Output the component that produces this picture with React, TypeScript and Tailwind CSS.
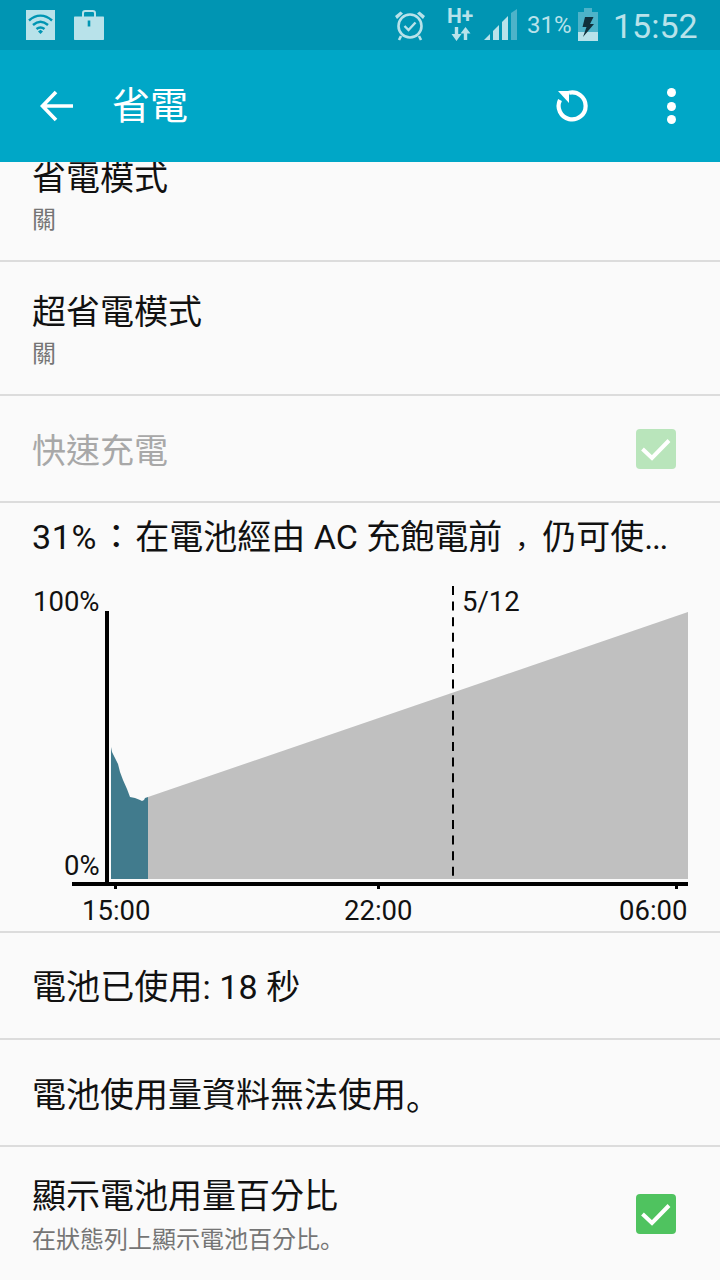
const sans = "font-['Roboto','Noto_Sans_CJK_TC',sans-serif]";
const sc = "font-['Noto_Sans_CJK_SC',sans-serif]";

const StatusBar = () => (
  <div className="relative flex h-[50px] shrink-0 items-center bg-[#0095b3] text-[#b8e2ea]">
    {/* wifi */}
    <svg width="29" height="30" viewBox="0 0 29 30" className="absolute left-[26px] top-[10px]">
      <rect width="29" height="30" fill="#b8e2ea" />
      <path d="M3 10.500C10 4 19 4 26 10.500" fill="none" stroke="#0095b3" strokeWidth="2.400" />
      <path d="M7 15C12 10.600 17 10.600 22 15" fill="none" stroke="#0095b3" strokeWidth="2.400" />
      <path d="M10.500 19C13 17 16 17 18.500 19" fill="none" stroke="#0095b3" strokeWidth="2.400" />
      <path d="M12 21.500L14.500 19.800L17 21.500L14.500 24Z" fill="#0095b3" />
    </svg>
    {/* briefcase */}
    <svg width="32" height="30" viewBox="0 0 32 30" className="absolute left-[73px] top-[10px]">
      <path d="M10 7V3.200C10 1.900 10.900 1 12.200 1H19.800C21.100 1 22 1.900 22 3.200V7" fill="none" stroke="#b8e2ea" strokeWidth="2" />
      <path d="M2 6.500H30C30.600 6.500 31 6.900 31 7.500V29C31 29.600 30.600 30 30 30H2C1.400 30 1 29.600 1 29V7.500C1 6.900 1.400 6.500 2 6.500Z" fill="#b8e2ea" />
      <rect x="14.700" y="10.500" width="2.600" height="6" fill="#0095b3" />
    </svg>
    {/* alarm */}
    <svg width="32" height="32" viewBox="0 0 32 32" className="absolute left-[394px] top-[9px]">
      <circle cx="16" cy="17" r="11.500" fill="none" stroke="#b8e2ea" strokeWidth="2.600" />
      <path d="M1 7L6.500 2.500L9 4.500L3 10Z M31 7L25.500 2.500L23 4.500L29 10Z" fill="#b8e2ea" />
      <path d="M10.500 17L14.500 21L21.500 13.500" fill="none" stroke="#b8e2ea" strokeWidth="2.400" />
      <path d="M7 27L5 31M25 27L27 31" stroke="#b8e2ea" strokeWidth="2.600" />
    </svg>
    {/* H+ */}
    <span className="absolute left-[447px] top-[4px] text-[21px] leading-[24px] font-bold">H+</span>
    <svg width="20" height="15" viewBox="0 0 20 15" className="absolute left-[451px] top-[27px]">
      <path d="M3.800 0H7.200V7H10.500L5.500 14L0.500 7H3.800Z" fill="#b8e2ea" />
      <path d="M12.800 13H16.200V6.500H19.500L14.500 0L9.500 6.500H12.800Z" fill="#b8e2ea" />
    </svg>
    {/* signal */}
    <svg width="33" height="32" viewBox="0 0 33 32" className="absolute left-[484px] top-[9px]">
      <path d="M0 31L6 25V31Z" fill="#b8e2ea" />
      <path d="M9 31V22L15 16V31Z" fill="#b8e2ea" />
      <path d="M18 31V13L24 7V31Z" fill="#b8e2ea" />
      <path d="M27 31V4L33 0V31Z" fill="#4db3c9" />
    </svg>
    <span className="absolute left-[527px] top-[10px] text-[24px] leading-[30px]">31%</span>
    {/* battery */}
    <svg width="20" height="33" viewBox="0 0 20 33" className="absolute left-[578px] top-[8px]">
      <path d="M6 0H14V4H20V33H0V4H6Z" fill="#4db3c9" />
      <rect y="24" width="20" height="9" fill="#b8e2ea" />
      <path d="M7 9H15.500L12 16H16L5 29L8.500 19H4.500Z" fill="#10303c" />
    </svg>
    <span className="absolute left-[613px] top-[5px] text-[34px] leading-[42px]">15:52</span>
  </div>
);

const Toolbar = () => (
  <div className="flex h-[112px] shrink-0 items-center bg-[#00a7c7] text-white">
    <svg width="34" height="32" viewBox="0 0 34 32" className="ml-[40px] shrink-0">
      <path d="M33 16H3M16 2L2.500 16L16 30" fill="none" stroke="#fff" strokeWidth="3.600" />
    </svg>
    <span className="ml-[38px] flex-1 text-[38px] leading-none">省電</span>
    <svg width="34" height="34" viewBox="0 0 34 34" className="mr-[78px] shrink-0">
      <path d="M14 3.800A13.500 13.500 0 1 1 5 11" fill="none" stroke="#fff" strokeWidth="4.200" />
      <path d="M3 2H14V14Z" fill="#fff" />
    </svg>
    <div className="mr-[44px] flex flex-col gap-[4.500px]">
      <div className="size-[9px] rounded-full bg-white" />
      <div className="size-[9px] rounded-full bg-white" />
      <div className="size-[9px] rounded-full bg-white" />
    </div>
  </div>
);

const CheckBox = ({ dim }: { dim?: boolean }) => (
  <div className={`flex size-[40px] shrink-0 items-center justify-center rounded-[4px] ${dim ? 'bg-[#b9e5bb]' : 'bg-[#4fc35f]'}`}>
    <svg width="32" height="26" viewBox="0 0 32 26">
      <path d="M2.500 13L12 22L29 4.500" fill="none" stroke="#fff" strokeWidth="4" />
    </svg>
  </div>
);

const BatteryChart = () => {
  // teal part of the curve, read off the reference
  const used = '111,879 111,747 112,752 115,758 118,764 120,772 123,780 127,789 130,797 135,798 140,800 142,801 144,800 145,798 148,797 148,879';
  return (
    <div className="relative h-[362px] border-b-2 border-[#dcdcdc] text-[27.5px] leading-[34px] text-[#111]">
      <svg width="720" height="360" viewBox="0 571 720 360" className="absolute left-0 top-0">
        <polygon points="148,797 688,612 688,879 148,879" fill="#c0c0c0" />
        <polygon points={used} fill="#417b8d" />
        <rect x="105" y="611" width="4" height="275" fill="#000" />
        <rect x="72" y="882" width="616" height="4" fill="#000" />
        <rect x="114" y="884" width="3" height="5" fill="#000" />
        <rect x="377" y="884" width="3" height="5" fill="#000" />
        <rect x="675" y="884" width="3" height="5" fill="#000" />
        <line x1="453" y1="586" x2="453" y2="880" stroke="#000" strokeWidth="2" strokeDasharray="9 6.600" />
      </svg>
      <span className="absolute left-[33px] top-[14px]">100%</span>
      <span className="absolute left-[462px] top-[14px]">5/12</span>
      <span className="absolute left-[64px] top-[278px]">0%</span>
      <span className="absolute left-[82px] top-[323px]">15:00</span>
      <span className="absolute left-[344px] top-[323px]">22:00</span>
      <span className="absolute left-[619px] top-[323px]">06:00</span>
    </div>
  );
};

export default function App() {
  return (
    <div className={`flex h-[1280px] w-[720px] flex-col overflow-hidden bg-[#fafafa] ${sans}`}>
      <StatusBar />
      <Toolbar />
      <div className="flex-1 overflow-hidden">
        <div className="-mt-[34px]">
          <div className="h-[134px] border-b-2 border-[#dcdcdc] pl-[32px] pt-[28px]">
            <div className="text-[34px] leading-[44px] text-[#111]">省電模式</div>
            <div className="mt-[5px] text-[24px] leading-[30px] text-[#757575]">關</div>
          </div>
          <div className="h-[134px] border-b-2 border-[#dcdcdc] pl-[32px] pt-[28px]">
            <div className="text-[34px] leading-[44px] text-[#111]">超省電模式</div>
            <div className="mt-[5px] text-[24px] leading-[30px] text-[#757575]">關</div>
          </div>
          <div className="flex h-[107px] items-center justify-between border-b-2 border-[#dcdcdc] pl-[32px] pr-[44px]">
            <span className="pt-[6px] text-[34px] text-[#a8a8a8]">快速充電</span>
            <CheckBox dim />
          </div>
          <div className="flex h-[68px] items-center whitespace-nowrap pl-[32px] text-[34px] leading-[44px] text-[#111]">
            <span className="tracking-[0.7px]">31%</span>
            <span className="inline-block w-[38px] text-center">：</span>
            <span>在電池經由 AC 充飽電前</span>
            <span className={`inline-block w-[40px] pl-[13px] text-[27px] ${sc}`}>，</span>
            <span>仍可使</span>
            <span className="tracking-[-1.3px]">...</span>
          </div>
          <BatteryChart />
          <div className="flex h-[107px] items-center border-b-2 border-[#dcdcdc] pl-[32px] pt-[4px] text-[34px] tracking-[0.1px] text-[#111]">
            電池已使用: 18 秒
          </div>
          <div className="flex h-[107px] items-center border-b-2 border-[#dcdcdc] pl-[32px] pt-[6px] text-[34px] text-[#111]">
            <span>電池使用量資料無法使用</span>
            <span className={sc}>。</span>
          </div>
          <div className="flex h-[134px] items-start justify-between pl-[32px] pr-[44px]">
            <div className="pt-[27px]">
              <div className="text-[34px] leading-[44px] text-[#111]">顯示電池用量百分比</div>
              <div className="mt-[5px] text-[24px] leading-[30px] text-[#757575]">
                <span>在狀態列上顯示電池百分比</span>
                <span className={sc}>。</span>
              </div>
            </div>
            <div className="pt-[47px]">
              <CheckBox />
            </div>
          </div>
        </div>
      </div>
    </div>
  );
}
